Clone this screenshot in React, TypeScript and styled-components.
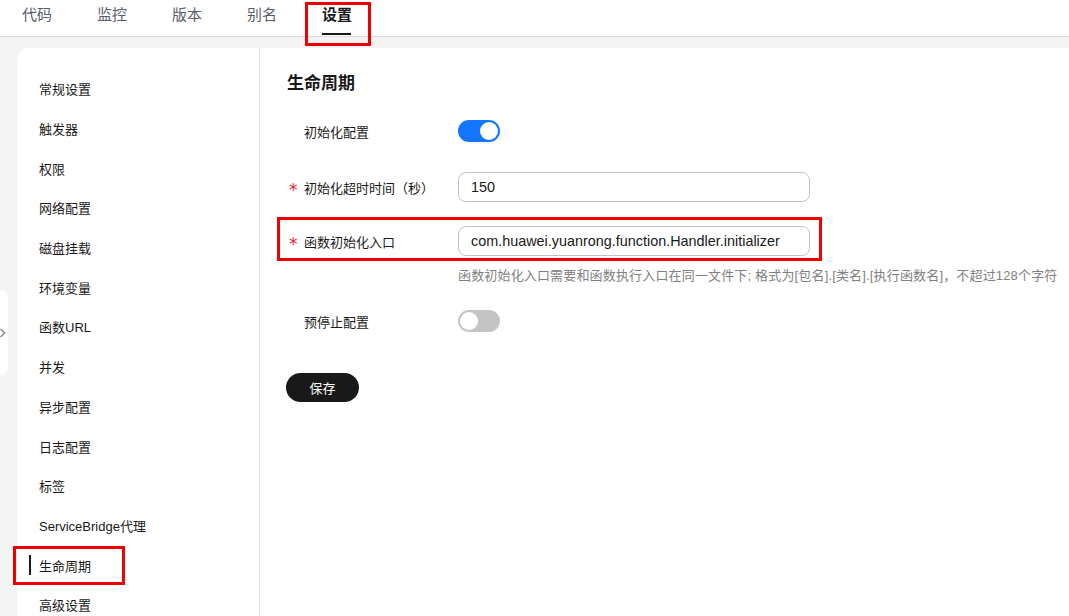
import React from "react";
import styled, { createGlobalStyle } from "styled-components";

const Global = createGlobalStyle`
  html, body { margin: 0; padding: 0; height: 100%; }
  body {
    background: #f4f4f4;
    font-family: "Liberation Sans", Arial, "Noto Sans CJK SC", sans-serif;
    color: #191919;
    overflow: hidden;
  }
  #root { height: 100%; }
`;

const Page = styled.div`
  height: 616px;
  display: flex;
  flex-direction: column;
  position: relative;
`;

const TabBar = styled.div`
  height: 36px;
  background: #fff;
  border-bottom: 1px solid #dcdcdc;
  display: flex;
  align-items: stretch;
  padding-left: 22px;
  gap: 45px;
  flex-shrink: 0;
`;

const Tab = styled.div<{ $active?: boolean }>`
  position: relative;
  font-size: 15px;
  line-height: 30px;
  color: ${(p) => (p.$active ? "#191919" : "#575d6c")};
  font-weight: ${(p) => (p.$active ? 600 : 400)};
  &::after {
    content: "";
    display: ${(p) => (p.$active ? "block" : "none")};
    position: absolute;
    left: 0;
    right: 1px;
    top: 33px;
    height: 2px;
    background: #191919;
  }
`;

const Highlight = styled.div<{ $l: number; $t: number; $w: number; $h: number }>`
  position: absolute;
  left: ${(p) => p.$l}px;
  top: ${(p) => p.$t}px;
  width: ${(p) => p.$w}px;
  height: ${(p) => p.$h}px;
  border: 3px solid #f00000;
  box-sizing: border-box;
  pointer-events: none;
  z-index: 5;
`;

const Body = styled.div`
  flex: 1;
  padding: 11px 0 0 17px;
  display: flex;
  min-height: 0;
`;

const Card = styled.div`
  flex: 1;
  background: #fff;
  border-top-left-radius: 12px;
  display: flex;
  min-height: 0;
`;

const Sidebar = styled.div`
  width: 242px;
  border-right: 1px solid #dfe1e6;
  padding-top: 21px;
  display: flex;
  flex-direction: column;
  flex-shrink: 0;
`;

const NavItem = styled.div<{ $active?: boolean }>`
  position: relative;
  height: 39.7px;
  display: flex;
  align-items: center;
  padding-left: 22px;
  font-size: 13px;
  color: #191919;
  flex-shrink: 0;
  &::before {
    content: "";
    display: ${(p) => (p.$active ? "block" : "none")};
    position: absolute;
    left: 12px;
    top: 10px;
    width: 2px;
    height: 20px;
    background: #191919;
  }
`;

const Main = styled.div`
  flex: 1;
  padding: 24px 0 0 27px;
  display: flex;
  flex-direction: column;
`;

const Title = styled.h2`
  margin: 0;
  font-size: 17px;
  font-weight: 700;
  line-height: 24px;
  color: #191919;
`;

const Form = styled.div`
  display: flex;
  flex-direction: column;
  margin-top: 24px;
`;

const Row = styled.div<{ $mt: number }>`
  position: relative;
  display: flex;
  align-items: center;
  margin-top: ${(p) => p.$mt}px;
`;

const Label = styled.div`
  width: 171px;
  flex-shrink: 0;
  display: flex;
  align-items: center;
  font-size: 13px;
  color: #191919;
`;

const Star = styled.span`
  width: 17px;
  padding-left: 2px;
  box-sizing: border-box;
  color: #e6283e;
  font-size: 17px;
  font-family: "DejaVu Sans", sans-serif;
  line-height: 13px;
  position: relative;
  top: 3px;
`;

const Switch = styled.div<{ $on?: boolean }>`
  width: 42px;
  height: 22px;
  border-radius: 11px;
  background: ${(p) => (p.$on ? "#1476ff" : "#c4c4c4")};
  position: relative;
  &::after {
    content: "";
    position: absolute;
    top: 2px;
    left: ${(p) => (p.$on ? "22px" : "2px")};
    width: 18px;
    height: 18px;
    border-radius: 50%;
    background: #fff;
  }
`;

const Input = styled.div`
  width: 352px;
  height: 30px;
  box-sizing: border-box;
  border: 1px solid #c2c2c2;
  border-radius: 8px;
  padding-left: 12px;
  display: flex;
  align-items: center;
  font-size: 14.4px;
  color: #191919;
`;

const Hint = styled.div`
  margin-left: 171px;
  margin-top: 9px;
  font-size: 13px;
  letter-spacing: 0.16px;
  color: #808080;
  white-space: nowrap;
`;

const SaveButton = styled.button`
  margin-top: 41px;
  align-self: flex-start;
  margin-left: -1px;
  width: 73px;
  height: 29px;
  border: none;
  border-radius: 15px;
  background: #191919;
  color: #fff;
  font-size: 13px;
  font-family: inherit;
  cursor: pointer;
`;

const CollapseHandle = styled.div`
  position: absolute;
  left: 0;
  top: 290px;
  width: 8px;
  height: 85px;
  background: #fff;
  border-radius: 0 8px 8px 0;
  display: flex;
  align-items: center;
  justify-content: flex-start;
`;

const navItems = [
  "常规设置",
  "触发器",
  "权限",
  "网络配置",
  "磁盘挂载",
  "环境变量",
  "函数URL",
  "并发",
  "异步配置",
  "日志配置",
  "标签",
  "ServiceBridge代理",
  "生命周期",
  "高级设置",
];

const tabs = ["代码", "监控", "版本", "别名", "设置"];

export default function App() {
  return (
    <>
      <Global />
      <Page>
        <TabBar>
          {tabs.map((t) => (
            <Tab key={t} $active={t === "设置"}>
              {t}
              {t === "设置" && <Highlight $l={-17} $t={2} $w={66} $h={44} />}
            </Tab>
          ))}
        </TabBar>
        <Body>
          <Card>
            <Sidebar>
              {navItems.map((n) => (
                <NavItem key={n} $active={n === "生命周期"}>
                  {n}
                  {n === "生命周期" && <Highlight $l={-4} $t={1} $w={112} $h={39} />}
                </NavItem>
              ))}
            </Sidebar>
            <Main>
              <Title>生命周期</Title>
              <Form>
                <Row $mt={0}>
                  <Label>
                    <Star />
                    初始化配置
                  </Label>
                  <Switch $on />
                </Row>
                <Row $mt={30}>
                  <Label>
                    <Star>*</Star>
                    初始化超时时间（秒）
                  </Label>
                  <Input>150</Input>
                </Row>
                <Row $mt={24}>
                  <Label>
                    <Star>*</Star>
                    函数初始化入口
                  </Label>
                  <Input>com.huawei.yuanrong.function.Handler.initializer</Input>
                  <Highlight $l={-10} $t={-9} $w={545} $h={44} />
                </Row>
                <Hint>
                  函数初始化入口需要和函数执行入口在同一文件下; 格式为[包名].[类名].[执行函数名]，不超过128个字符
                </Hint>
                <Row $mt={26}>
                  <Label>
                    <Star />
                    预停止配置
                  </Label>
                  <Switch />
                </Row>
              </Form>
              <SaveButton>保存</SaveButton>
            </Main>
          </Card>
        </Body>
        <CollapseHandle>
          <svg width="6" height="10" viewBox="0 0 6 10">
            <path d="M0.5 1 L4.5 5 L0.5 9" fill="none" stroke="#8a8a8a" strokeWidth="1.5" />
          </svg>
        </CollapseHandle>
      </Page>
    </>
  );
}
